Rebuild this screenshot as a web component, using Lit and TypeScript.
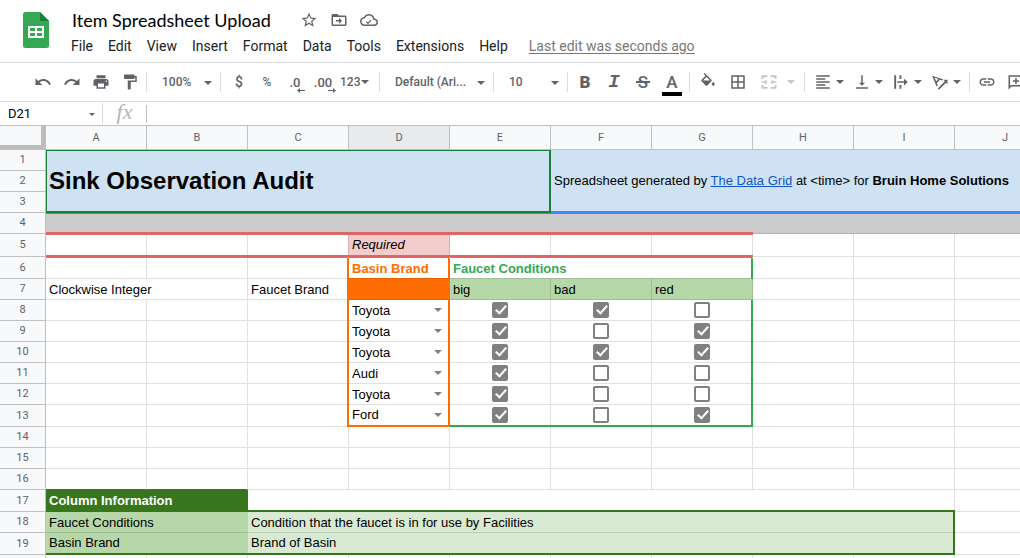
import { LitElement, html, svg, css, nothing } from "lit";
import { customElement, property, state } from "lit/decorators.js";
import { classMap } from "lit/directives/class-map.js";

const ICONS: Record<string, unknown> = {
  undo: svg`<path d="M12.5 8c-2.65 0-5.05.99-6.9 2.6L2 7v9h9l-3.62-3.62c1.39-1.16 3.16-1.88 5.12-1.88 3.54 0 6.55 2.31 7.6 5.5l2.37-.78C21.08 11.03 17.15 8 12.5 8z"/>`,
  redo: svg`<path d="M18.4 10.6C16.55 8.99 14.15 8 11.5 8c-4.65 0-8.58 3.03-9.96 7.22L3.9 16c1.05-3.19 4.05-5.5 7.6-5.5 1.95 0 3.73.72 5.12 1.88L13 16h9V7l-3.6 3.6z"/>`,
  print: svg`<path d="M19 8H5c-1.66 0-3 1.34-3 3v6h4v4h12v-4h4v-6c0-1.66-1.34-3-3-3zm-3 11H8v-5h8v5zm3-7c-.55 0-1-.45-1-1s.45-1 1-1 1 .45 1 1-.45 1-1 1zm-1-9H6v4h12V3z"/>`,
  paint: svg`<path d="M18 4V3c0-.55-.45-1-1-1H5c-.55 0-1 .45-1 1v4c0 .55.45 1 1 1h12c.55 0 1-.45 1-1V6h1v4H9v11c0 .55.45 1 1 1h2c.55 0 1-.45 1-1v-9h8V4h-3z"/>`,
  fill: svg`<path d="M16.56 8.94L7.62 0 6.21 1.41l2.38 2.38-5.15 5.15c-.59.59-.59 1.54 0 2.12l5.5 5.5c.29.29.68.44 1.06.44s.77-.15 1.06-.44l5.5-5.5c.59-.58.59-1.53 0-2.12zM5.21 10L10 5.21 14.79 10H5.21zM19 11.5s-2 2.17-2 3.5c0 1.1.9 2 2 2s2-.9 2-2c0-1.33-2-3.5-2-3.5z"/>`,
  borders: svg`<path d="M3 3v18h18V3H3zm8 16H5v-6h6v6zm0-8H5V5h6v6zm8 8h-6v-6h6v6zm0-8h-6V5h6v6z"/>`,
  merge: svg`<path d="M2 3h8v2.500H4.500V8H2zM14 3h8v5h-2.500V5.500H14zM2 16h2.500v2.500H10V21H2zM19.500 16H22v5h-8v-2.500h5.500zM2 11h4.500V8.500L10 12l-3.500 3.500V13H2zM22 11h-4.500V8.500L14 12l3.500 3.500V13H22z"/>`,
  align: svg`<path d="M15 15H3v2h12v-2zm0-8H3v2h12V7zM3 13h18v-2H3v2zm0 8h18v-2H3v2zM3 3v2h18V3H3z"/>`,
  valign: svg`<path d="M16 13h-3V3h-2v10H8l4 4 4-4zM4 19v2h16v-2H4z"/>`,
  wrap: svg`<path d="M3 3h2.500v18H3zM10 3h2.500v5H10zM10 16h2.500v5H10zM7 11h9V7.500l5 4.500-5 4.500V13H7z"/>`,
  rotate: svg`<path d="M1.500 3.500 16 8.200l-1 1.900-3.200-1-4 4.500 1.400 3-1.900 1.200zM4.800 6l2.200 5.200 2.800-3.100zM9 20.500 18.500 11l-2-2H22v6l-2-2-9.400 9.300z"/>`,
  link: svg`<path d="M3.900 12c0-1.710 1.390-3.100 3.100-3.100h4V7H7c-2.760 0-5 2.240-5 5s2.240 5 5 5h4v-1.900H7c-1.710 0-3.100-1.390-3.100-3.100zM8 13h8v-2H8v2zm9-6h-4v1.900h4c1.710 0 3.100 1.390 3.100 3.100s-1.390 3.100-3.100 3.100h-4V17h4c2.760 0 5-2.240 5-5s-2.240-5-5-5z"/>`,
  comment: svg`<path d="M2 3h20v15H6l-4 4zm2 2v12l1-1h15V5zM11 6.500h2V9.500h3v2h-3v3h-2v-3H8v-2h3z"/>`,
  star: svg`<path d="M22 9.240l-7.190-.62L12 2 9.190 8.630 2 9.240l5.460 4.730L5.820 21 12 17.270 18.180 21l-1.630-7.030L22 9.240zM12 15.400l-3.760 2.270 1-4.280-3.320-2.880 4.380-.38L12 6.100l1.710 4.040 4.380.38-3.320 2.880 1 4.280L12 15.400z"/>`,
  move: svg`<path d="M20 6h-8l-2-2H4c-1.100 0-2 .9-2 2v12c0 1.100.9 2 2 2h16c1.100 0 2-.9 2-2V8c0-1.100-.9-2-2-2zm0 12H4V8h16v10zM8 12h4V9l4 4-4 4v-3H8z"/>`,
  cloud: svg`<path d="M19.350 10.040C18.670 6.590 15.640 4 12 4 9.110 4 6.610 5.640 5.360 8.040 2.350 8.360 0 10.900 0 14c0 3.310 2.690 6 6 6h13c2.760 0 5-2.240 5-5 0-2.640-2.050-4.780-4.650-4.960zM19 18H6c-2.210 0-4-1.790-4-4 0-2.050 1.530-3.760 3.560-3.970l1.070-.11.5-.95C8.080 7.140 9.940 6 12 6c2.620 0 4.880 1.860 5.390 4.430l.3 1.500 1.530.11c1.560.1 2.780 1.410 2.780 2.960 0 1.650-1.350 3-3 3zm-8.500-2.800l-1.700-1.700-1.200 1.200 2.900 2.900 4.900-4.900-1.200-1.200z"/>`,
};

@customElement("sheet-icon")
export class SheetIcon extends LitElement {
  @property() name = "";
  static styles = css`
    :host { display: block; width: 18px; height: 18px; flex: none; }
    svg { display: block; width: 100%; height: 100%; fill: currentColor; }
  `;
  render() {
    return html`<svg viewBox="0 0 24 24" aria-hidden="true">${ICONS[this.name]}</svg>`;
  }
}

@customElement("sheet-caret")
export class SheetCaret extends LitElement {
  static styles = css`
    :host { display: block; width: 8px; height: 4px; flex: none; pointer-events: none; }
    svg { display: block; width: 100%; height: 100%; fill: currentColor; }
  `;
  render() {
    return html`<svg viewBox="0 0 8 4" aria-hidden="true"><path d="M0 0h8L4 4z"/></svg>`;
  }
}

@customElement("sheet-header")
export class SheetHeader extends LitElement {
  static styles = css`
    :host { display: block; border-bottom: 1px solid #dadce0; font-family: Roboto, sans-serif; }
    .head { display: flex; height: 62px; }
    .logo { width: 26px; height: 36px; margin: 12px 15px 0 23px; flex: none; }
    .top { display: flex; align-items: center; height: 24px; margin-top: 8px; }
    .doc { font: 400 18px/24px Lato, sans-serif; color: #000; margin: 0 29px 0 8px; white-space: nowrap; }
    .acts { display: flex; gap: 12px; }
    button { border: 0; background: none; padding: 0; margin: 0; font: inherit; color: inherit; }
    .acts button { color: #5f6368; }
    .menus { display: flex; align-items: center; gap: 1px; height: 28px; font-size: 14px; color: #202124; white-space: nowrap; }
    .menus button { padding: 0 7px; height: 20px; }
    .menus a { color: #777; margin-left: 13px; text-underline-offset: 2px; }
  `;
  render() {
    const menus = ["File", "Edit", "View", "Insert", "Format", "Data", "Tools", "Extensions", "Help"];
    return html`<header class="head">
      <svg class="logo" viewBox="0 0 26 36" role="img" aria-label="Sheets">
        <path d="M2.500 0H17l9 9v24.500a2.500 2.500 0 0 1-2.500 2.500h-21A2.500 2.500 0 0 1 0 33.500v-31A2.500 2.500 0 0 1 2.500 0z" fill="#34a853"/>
        <path d="M17 0l9 9h-9z" fill="#188038"/>
        <path d="M5 14h16v12H5zM7 16v3h5v-3zM14 16v3h5v-3zM7 21v3h5v-3zM14 21v3h5v-3z" fill="#fff" fill-rule="evenodd"/>
      </svg>
      <div>
        <div class="top">
          <h1 class="doc">Item Spreadsheet Upload</h1>
          <div class="acts">
            <button aria-label="Star"><sheet-icon name="star"></sheet-icon></button>
            <button aria-label="Move"><sheet-icon name="move"></sheet-icon></button>
            <button aria-label="Document status"><sheet-icon name="cloud"></sheet-icon></button>
          </div>
        </div>
        <nav class="menus">
          ${menus.map((m) => html`<button>${m}</button>`)}
          <a href="#history">Last edit was seconds ago</a>
        </nav>
      </div>
    </header>`;
  }
}

@customElement("sheet-toolbar")
export class SheetToolbar extends LitElement {
  static styles = css`
    :host { display: block; border-bottom: 1px solid #dadce0; font-family: Roboto, sans-serif; color: #5f6368; overflow: hidden; }
    .bar { display: flex; align-items: center; height: 38px; padding-left: 26px; }
    .group { display: flex; align-items: center; gap: 1px; padding: 0 3px; border-right: 1px solid #dadce0; height: 20px; flex: none; }
    .group.first { padding-right: 2px; }
    .group.last { border: 0; }
    .group.num, .group.wide { gap: 0; padding: 0 4px; }
    .group.roomy { gap: 2px; padding: 0 4px; }
    button { display: flex; align-items: center; justify-content: center; width: 28px; height: 26px; padding: 0; border: 0; background: none; color: inherit; font: 500 12px/16px Roboto, sans-serif; flex: none; }
    .wide button { width: 39px; gap: 4px; }
    .num .menu { width: 38px; gap: 1px; justify-content: flex-start; padding-left: 3px; }
    .off { color: #c4c6c8; width: 46px; gap: 9px; }
    .money { font-size: 14px; }
    .dec { display: flex; flex-direction: column; align-items: flex-end; font-size: 13px; line-height: 13px; padding-top: 5px; }
    .dec svg { width: 8px; height: 5px; margin: -1px -4px 0 0; fill: currentColor; }
    .b { font-size: 17px; font-weight: 900; }
    .i { font: italic 700 19px/20px "Liberation Mono", monospace; }
    .s { position: relative; font-size: 17px; }
    .s::after { content: ""; position: absolute; left: 7px; right: 7px; top: 12px; height: 2px; background: currentColor; }
    .a { display: flex; flex-direction: column; align-items: center; font-size: 17px; font-weight: 500; line-height: 17px; padding-top: 5px; }
    .swatch { width: 20px; height: 4px; background: #000; margin-top: 1px; }
    .pick { display: flex; align-items: center; position: relative; border-right: 1px solid #dadce0; height: 20px; flex: none; }
    .pick select { appearance: none; border: 0; background: none; color: inherit; font: 500 12px/20px Roboto, sans-serif; height: 20px; padding: 0 0 0 15px; width: 73px; }
    .pick.font select { width: 113px; }
    .pick sheet-caret { position: absolute; right: 8px; top: 9px; }
  `;
  private btn(name: string, label: string) {
    return html`<button aria-label=${label}><sheet-icon name=${name}></sheet-icon></button>`;
  }
  private drop(name: string, label: string) {
    return html`<button aria-label=${label}><sheet-icon name=${name}></sheet-icon><sheet-caret></sheet-caret></button>`;
  }
  private pick(label: string, value: string, kind = "") {
    return html`<div class="pick ${kind}"><select aria-label=${label}><option>${value}</option></select><sheet-caret></sheet-caret></div>`;
  }
  render() {
    return html`<div class="bar" role="toolbar">
      <div class="group first">${this.btn("undo", "Undo")}${this.btn("redo", "Redo")}${this.btn("print", "Print")}${this.btn("paint", "Paint format")}</div>
      ${this.pick("Zoom", "100%")}
      <div class="group num">
        <button class="money">$</button>
        <button>%</button>
        <button aria-label="Decrease decimal places"><span class="dec">.0<svg viewBox="0 0 8 5"><path d="M3 0v2h5v1H3v2L0 2.500z"/></svg></span></button>
        <button aria-label="Increase decimal places"><span class="dec">.00<svg viewBox="0 0 8 5"><path d="M5 0v2H0v1h5v2l3-2.500z"/></svg></span></button>
        <button class="menu">123<sheet-caret></sheet-caret></button>
      </div>
      ${this.pick("Font", "Default (Ari...", "font")}
      ${this.pick("Font size", "10")}
      <div class="group">
        <button class="b">B</button>
        <button class="i">I</button>
        <button class="s">S</button>
        <button aria-label="Text color"><span class="a">A<span class="swatch"></span></span></button>
      </div>
      <div class="group roomy">
        ${this.btn("fill", "Fill color")}${this.btn("borders", "Borders")}
        <button class="off" disabled aria-label="Merge cells"><sheet-icon name="merge"></sheet-icon><sheet-caret></sheet-caret></button>
      </div>
      <div class="group wide">
        ${this.drop("align", "Horizontal align")}${this.drop("valign", "Vertical align")}${this.drop("wrap", "Text wrapping")}${this.drop("rotate", "Text rotation")}
      </div>
      <div class="group last">${this.btn("link", "Insert link")}${this.btn("comment", "Insert comment")}</div>
    </div>`;
  }
}

@customElement("formula-bar")
export class FormulaBar extends LitElement {
  static styles = css`
    :host { display: flex; align-items: center; height: 23px; border-bottom: 1px solid #c0c0c0; font-family: Roboto, sans-serif; }
    .name { position: relative; width: 102px; border-right: 1px solid #dadce0; }
    input { box-sizing: border-box; display: block; width: 100%; height: 21px; border: 0; padding: 0 8px; background: none; font: 13px/21px Roboto, sans-serif; color: #000; outline: 0; }
    .name sheet-caret { position: absolute; right: 7px; top: 10px; width: 6px; height: 3px; color: #5f6368; }
    .fx { width: 43px; text-align: center; border-right: 1px solid #c0c0c0; height: 18px; font: italic 22px/14px "Liberation Serif", serif; color: #b5b5b5; }
    .formula { flex: 1; }
  `;
  render() {
    return html`
      <div class="name"><input aria-label="Name box" .value=${"D21"} /><sheet-caret></sheet-caret></div>
      <div class="fx">fx</div>
      <div class="formula"><input aria-label="Formula" /></div>`;
  }
}

interface Item { brand: string; checks: boolean[]; }

@customElement("sheet-grid")
export class SheetGrid extends LitElement {
  @state() private items: Item[] = [
    { brand: "Toyota", checks: [true, true, false] },
    { brand: "Toyota", checks: [true, false, true] },
    { brand: "Toyota", checks: [true, true, true] },
    { brand: "Audi", checks: [true, false, false] },
    { brand: "Toyota", checks: [true, false, false] },
    { brand: "Ford", checks: [true, false, true] },
  ];
  static styles = css`
    :host { display: block; overflow: hidden; font-family: "Liberation Sans", Arial, sans-serif; }
    table { table-layout: fixed; width: 1056px; border-collapse: separate; border-spacing: 0; font-size: 13px; line-height: 16px; color: #000; }
    .c0 { width: 46px; }
    .c { width: 101px; }
    th, td { box-sizing: border-box; padding: 0; border: 0 solid rgba(0, 0, 0, 0.12); border-width: 0 1px 1px 0; text-align: left; font-weight: 400; white-space: nowrap; }
    td { position: relative; padding-left: 3px; }
    tr { height: 21px; }
    .h22 { height: 22px; }
    .h23 { height: 23px; }
    .low td { padding-top: 2px; }
    .cols { height: 24px; }
    th { background: #f8f9fa; border-color: #c0c0c0; color: #5f6368; font: 11px/14px Roboto, sans-serif; text-align: center; }
    .cur { background: #e8eaed; }
    .corner { border-color: #bdbdbd; border-width: 0 5px 5px 0; }
    .blue { background: #cfe2f3; border-right: 0; border-bottom: 2px solid #4285f4; }
    .title { font-size: 24px; font-weight: 700; line-height: 30px; }
    .title::after { content: ""; position: absolute; inset: 0 0 -2px 0; border: solid #188038; border-width: 1px 2px 2px 1px; pointer-events: none; }
    a { color: #1155cc; }
    .gap td { background: #ccc; border-right: 0; border-top: 1px solid #4285f4; }
    .gap .red { border-bottom: 2px solid #e06666; }
    .pink { background: #f4cccc; font-style: italic; }
    .req .edge { border-right-color: #d7b4b4; }

    /* Thick rules run unbroken across the thin grid lines they meet. */
    .or::after, .gr::after, .side::after, .req .red::after, .after::before,
    .req .red::before, .ob::before, .gb::before, .line::before { content: ""; position: absolute; background: var(--rule); pointer-events: none; }
    .or, .gr, .side { border-right-width: 2px; }
    .or::after, .gr::after, .side::after { inset: 0 -2px -1px auto; width: 2px; background: var(--side); }
    .ob::after, .gr.gb::after, .side.line::after { bottom: -2px; }
    .red, .ob, .gb, .line { border-bottom-width: 2px; }
    .req .red::before, .ob::before, .gb::before, .line::before { inset: auto -1px -2px 0; height: 2px; }
    .req .red { --rule: #e06666; border-top: 1px solid transparent; }
    .req .red::after { inset: -1px -1px auto 0; height: 1px; }
    .after { --rule: #e06666; border-top: 1px solid transparent; }
    .after::before { inset: -1px -1px auto 0; height: 1px; }
    .or { --side: #ff6d01; }
    .gr { --side: #34a853; }
    .side { --side: #38761d; }
    .ob { --rule: #ff6d01; }
    .gb { --rule: #34a853; }
    .line { --rule: #38761d; }

    .ink { color: #ff6d01; font-weight: 700; }
    .orange { background: #ff6d01; }
    .ink.or, .orange { border-bottom-color: #e66201; }
    .green { color: #34a853; font-weight: 700; border-bottom-color: #a2bf95; }
    .lite { background: #b6d7a8; }
    .box { padding: 0; text-align: center; }
    .box input { appearance: none; display: block; box-sizing: border-box; width: 16px; height: 16px; margin: 0 auto; border: 2px solid #808080; border-radius: 2px; background: #fff; }
    .low .box { padding-top: 0; }
    .box input:checked { background: #808080; }
    .box input:checked::after { content: ""; display: block; box-sizing: border-box; width: 6px; height: 11px; margin: -1px 0 0 4px; border: solid #fff; border-width: 0 2px 2px 0; transform: rotate(42deg); }
    .brand select { appearance: none; display: block; width: 97px; height: 18px; border: 0; background: none; padding: 0; font: inherit; color: inherit; }
    .brand sheet-caret { position: absolute; right: 6px; top: 8px; color: #808080; }
    .dark { background: #38761d; color: #fff; font-weight: 700; border-color: #38761d; }
    .pre { border-bottom-color: #38761d; }
    .pale { background: #d9ead3; }
    .flat { border-right-color: transparent; }
  `;
  private cells(n: number, cls = "") {
    return Array.from({ length: n }, () => html`<td class=${cls || nothing}></td>`);
  }
  private toggle(r: number, c: number) {
    this.items = this.items.map((it, i) => (i === r ? { ...it, checks: it.checks.map((v, j) => (j === c ? !v : v)) } : it));
  }
  private itemRow(it: Item, r: number) {
    const last = r === this.items.length - 1;
    const foot = (cls: string) => (last ? cls : "");
    return html`<tr class=${classMap({ h22: last, low: !last })}>
      <th>${r + 8}</th>${this.cells(2)}<td class="or"></td>
      <td class="brand or ${foot("ob")}">
        <select aria-label="Basin brand, row ${r + 8}">
          ${["Toyota", "Audi", "Ford"].map((b) => html`<option ?selected=${b === it.brand}>${b}</option>`)}
        </select><sheet-caret></sheet-caret>
      </td>
      ${it.checks.map((v, c) => html`<td class="box ${foot("gb")} ${c === 2 ? "gr" : ""}">
        <input type="checkbox" aria-label="${["big", "bad", "red"][c]}, row ${r + 8}" .checked=${v} @change=${() => this.toggle(r, c)} />
      </td>`)}
      ${this.cells(3)}
    </tr>`;
  }
  render() {
    return html`<table>
      <colgroup><col class="c0" />${[..."ABCDEFGHIJ"].map(() => html`<col class="c" />`)}</colgroup>
      <thead><tr class="cols"><th class="corner"></th>${[..."ABCDEFGHIJ"].map((l) => html`<th class=${l === "D" ? "cur" : ""}>${l}</th>`)}</tr></thead>
      <tbody>
        <tr><th>1</th>
          <td class="blue title" colspan="5" rowspan="3">Sink Observation Audit</td>
          <td class="blue" colspan="5" rowspan="3">Spreadsheet generated by <a href="#grid">The Data Grid</a> at &lt;time&gt; for <b>Bruin Home Solutions</b></td>
        </tr>
        <tr><th>2</th></tr>
        <tr><th>3</th></tr>
        <tr class="gap"><th>4</th><td class="red" colspan="7"></td><td colspan="3"></td></tr>
        <tr class="req h23"><th>5</th>${this.cells(2, "red")}<td class="red edge"></td><td class="red edge pink">Required</td>${this.cells(3, "red")}${this.cells(3)}</tr>
        <tr class="h22 low"><th>6</th>${this.cells(2, "after")}<td class="after or"></td><td class="after ink or">Basin Brand</td><td class="after green gr" colspan="3">Faucet Conditions</td>${this.cells(3)}</tr>
        <tr class="low"><th>7</th><td colspan="2">Clockwise Integer</td><td class="or">Faucet Brand</td><td class="orange or"></td>
          <td class="lite">big</td><td class="lite">bad</td><td class="lite">red</td>${this.cells(3)}</tr>
        ${this.items.map((it, r) => this.itemRow(it, r))}
        ${[14, 15].map((n) => html`<tr><th>${n}</th>${this.cells(10)}</tr>`)}
        <tr><th>16</th>${this.cells(2, "pre")}${this.cells(8)}</tr>
        <tr class="h22"><th>17</th><td class="dark" colspan="2">Column Information</td><td class="line" colspan="7"></td><td></td></tr>
        <tr class="low"><th>18</th><td class="lite flat" colspan="2">Faucet Conditions</td><td class="pale side" colspan="7">Condition that the faucet is in for use by Facilities</td><td></td></tr>
        <tr class="h22"><th>19</th><td class="lite flat line" colspan="2">Basin Brand</td><td class="pale side line" colspan="7">Brand of Basin</td><td></td></tr>
        <tr><th></th>${this.cells(10)}</tr>
      </tbody>
    </table>`;
  }
}

@customElement("app-root")
export class AppRoot extends LitElement {
  static styles = css`
    :host { display: flex; flex-direction: column; height: 100vh; overflow: hidden; background: #fff; }
    sheet-header, sheet-toolbar, formula-bar { flex: none; }
    sheet-grid { flex: 1; min-height: 0; }
  `;
  render() {
    return html`<sheet-header></sheet-header><sheet-toolbar></sheet-toolbar><formula-bar></formula-bar><sheet-grid></sheet-grid>`;
  }
}
